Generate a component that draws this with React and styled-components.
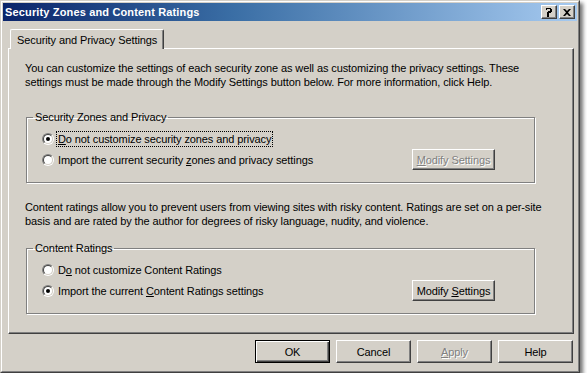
import React from 'react'
import styled, { createGlobalStyle } from 'styled-components'

const GlobalStyle = createGlobalStyle`
  html, body {
    margin: 0;
    padding: 0;
    background: #fff;
  }
  body {
    font-family: "Liberation Sans", Arial, sans-serif;
    font-size: 11px;
    letter-spacing: -0.1px;
    color: #000;
  }
`

const Window = styled.div`
  box-sizing: border-box;
  width: 580px;
  height: 373px;
  background: #d4d0c8;
  border: 1px solid;
  border-color: #d4d0c8 #404040 #404040 #d4d0c8;
  box-shadow: 3px 3px 4px rgba(0, 0, 0, 0.55);
  display: flex;
  flex-direction: column;
`

const Frame = styled.div`
  flex: 1;
  display: flex;
  flex-direction: column;
  border: 1px solid;
  border-color: #fff #808080 #808080 #fff;
  padding: 1px;
`

const TitleBar = styled.div`
  height: 18px;
  display: flex;
  align-items: center;
  padding: 0 2px 0 2px;
  background: linear-gradient(to right, #0a246a 0%, #3a6ea5 40%, #a6caf0 100%);
`

const Title = styled.div`
  flex: 1;
  color: #fff;
  font-weight: bold;
  font-size: 11px;
  letter-spacing: 0.15px;
`

const CaptionButton = styled.div`
  box-sizing: border-box;
  width: 16px;
  height: 14px;
  margin-left: ${p => p.$gap || 0}px;
  background: #d4d0c8;
  border: 1px solid;
  border-color: #fff #404040 #404040 #fff;
  box-shadow: inset -1px -1px #808080;
  display: flex;
  align-items: center;
  justify-content: center;
  svg { display: block; }
`

const Body = styled.div`
  flex: 1;
  display: flex;
  flex-direction: column;
  padding: 8px 3px 6px 5px;
`

const TabStrip = styled.div`
  display: flex;
  padding-left: 2px;
  position: relative;
  z-index: 1;
`

const Tab = styled.div`
  height: 19px;
  padding: 0 6px 0 6px;
  display: flex;
  align-items: center;
  border: 1px solid;
  border-color: #fff #404040 transparent #fff;
  border-bottom: none;
  border-radius: 2px 2px 0 0;
  box-shadow: inset -1px 0 #808080;
  background: #d4d0c8;
  margin-bottom: -1px;
`

const Panel = styled.div`
  height: 286px;
  box-sizing: border-box;
  border: 1px solid;
  border-color: #fff #404040 #404040 #fff;
  box-shadow: inset -1px -1px #808080;
  padding: 12px 16px 0 16px;
`

const Paragraph = styled.p`
  margin: ${p => p.$before || 0}px 0 ${p => p.$after || 0}px 0;
  line-height: 14px;
  white-space: nowrap;
`

const Group = styled.fieldset`
  margin: 0 22px 0 1px;
  padding: 4px 0 0 15px;
  height: ${p => p.$height}px;
  box-sizing: border-box;
  border: 1px solid #808080;
  box-shadow: 1px 1px #fff, inset 1px 1px #fff;
  border-radius: 0;
  legend {
    padding: 0 2px;
    margin-left: -9px;
    line-height: 13px;
  }
`

const OptionRow = styled.div`
  height: 21px;
  display: flex;
  align-items: center;
  padding-right: 39px;
`

const Radio = styled.span`
  box-sizing: border-box;
  width: 12px;
  height: 12px;
  border-radius: 50%;
  border: 1px solid;
  border-color: #808080 #fff #fff #808080;
  background: #d4d0c8;
  position: relative;
  flex-shrink: 0;
  &::before {
    content: '';
    position: absolute;
    inset: 0;
    border-radius: 50%;
    border: 1px solid;
    border-color: #404040 #d4d0c8 #d4d0c8 #404040;
    background: #fff;
  }
  &::after {
    content: '';
    display: ${p => (p.$checked ? 'block' : 'none')};
    position: absolute;
    width: 4px;
    height: 4px;
    border-radius: 50%;
    background: #000;
    left: 3px;
    top: 3px;
  }
`

const Label = styled.span`
  margin-left: 2px;
  padding: 1px 1px;
  border: 1px dotted ${p => (p.$focus ? '#000' : 'transparent')};
  white-space: nowrap;
  u { text-decoration: underline; text-underline-offset: 1px; }
`

const Spacer = styled.div`
  flex: 1;
`

const Button = styled.button`
  box-sizing: border-box;
  width: ${p => p.$width || 75}px;
  height: ${p => p.$height || 23}px;
  margin: 0;
  padding: 0;
  font-family: inherit;
  font-size: 11px;
  letter-spacing: inherit;
  background: #d4d0c8;
  color: ${p => (p.disabled ? '#808080' : '#000')};
  text-shadow: ${p => (p.disabled ? '1px 1px #fff' : 'none')};
  border: 1px solid;
  border-color: ${p => (p.$default ? '#000' : '#fff #404040 #404040 #fff')};
  box-shadow: ${p =>
    p.$default
      ? 'inset 1px 1px #fff, inset -1px -1px #404040, inset -2px -2px #808080'
      : 'inset -1px -1px #808080'};
  u { text-decoration: underline; }
`

const ButtonRow = styled.div`
  display: flex;
  justify-content: flex-end;
  gap: 6px;
  padding-top: 6px;
  padding-right: 1px;
`

const HelpGlyph = () => (
  <svg width="8" height="10" viewBox="0 0 8 10">
    <path d="M1 1h1v-0h4v1h1v3h-1v1h-2v2h-2v-3h1v-1h2v-2h-3v1h-1z" fill="#000" />
    <rect x="2" y="8" width="2" height="2" fill="#000" />
  </svg>
)

const CloseGlyph = () => (
  <svg width="8" height="7" viewBox="0 0 8 7">
    <path d="M0 0h2l2 2 2-2h2l-3 3.5 3 3.5h-2l-2-2-2 2h-2l3-3.5z" fill="#000" />
  </svg>
)

export default function App() {
  return (
    <>
      <GlobalStyle />
      <Window>
        <Frame>
          <TitleBar>
            <Title>Security Zones and Content Ratings</Title>
            <CaptionButton><HelpGlyph /></CaptionButton>
            <CaptionButton $gap={2}><CloseGlyph /></CaptionButton>
          </TitleBar>
          <Body>
            <TabStrip>
              <Tab>Security and Privacy Settings</Tab>
            </TabStrip>
            <Panel>
              <Paragraph $after={22}>
                You can customize the settings of each security zone as well as customizing the privacy settings. These
                <br />
                settings must be made through the Modify Settings button below. For more information, click Help.
              </Paragraph>
              <Group $height={72}>
                <legend>Security Zones and Privacy</legend>
                <OptionRow>
                  <Radio $checked />
                  <Label $focus><u>D</u>o not customize security zones and privacy</Label>
                </OptionRow>
                <OptionRow>
                  <Radio />
                  <Label>Import the current security <u>z</u>ones and privacy settings</Label>
                  <Spacer />
                  <Button disabled $width={83} $height={21}><u>M</u>odify Settings</Button>
                </OptionRow>
              </Group>
              <Paragraph $before={17} $after={14}>
                Content ratings allow you to prevent users from viewing sites with risky content. Ratings are set on a per-site
                <br />
                basis and are rated by the author for degrees of risky language, nudity, and violence.
              </Paragraph>
              <Group $height={72}>
                <legend>Content Ratings</legend>
                <OptionRow>
                  <Radio />
                  <Label>D<u>o</u> not customize Content Ratings</Label>
                </OptionRow>
                <OptionRow>
                  <Radio $checked />
                  <Label>Import the current <u>C</u>ontent Ratings settings</Label>
                  <Spacer />
                  <Button $width={83} $height={21}>Modify <u>S</u>ettings</Button>
                </OptionRow>
              </Group>
            </Panel>
            <ButtonRow>
              <Button $default>OK</Button>
              <Button>Cancel</Button>
              <Button disabled><u>A</u>pply</Button>
              <Button>Help</Button>
            </ButtonRow>
          </Body>
        </Frame>
      </Window>
    </>
  )
}
